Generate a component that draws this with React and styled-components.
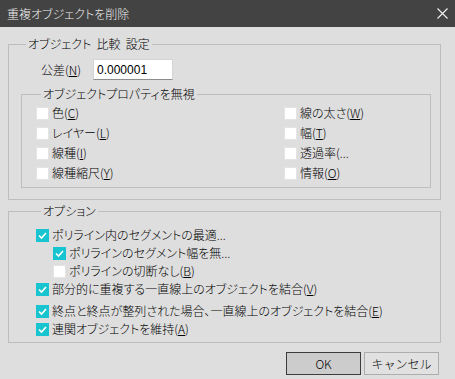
import React from 'react'
import styled, { createGlobalStyle } from 'styled-components'

const GlobalStyle = createGlobalStyle`
  html, body {
    margin: 0;
    padding: 0;
    background: #dedede;
  }
  body {
    font-family: "Noto Sans CJK JP", "Noto Sans", sans-serif;
    font-size: 12px;
    font-weight: 300;
    color: #000;
    font-feature-settings: "palt";
  }
`

const properties = [
  ['色(', 'C', ')'],
  ['線の太さ(', 'W', ')'],
  ['レイヤー(', 'L', ')'],
  ['幅(', 'T', ')'],
  ['線種(', 'I', ')'],
  ['透過率(...', '', ''],
  ['線種縮尺(', 'Y', ')'],
  ['情報(', 'O', ')'],
]

const options = [
  { pre: 'ポリライン内のセグメントの最適...', key: '', post: '', checked: true, level: 0 },
  { pre: 'ポリラインのセグメント幅を無...', key: '', post: '', checked: true, level: 1 },
  { pre: 'ポリラインの切断なし(', key: 'B', post: ')', checked: false, level: 1 },
  { pre: '部分的に重複する一直線上のオブジェクトを結合(', key: 'V', post: ')', checked: true, level: 0 },
  { pre: '終点と終点が整列された場合、一直線上のオブジェクトを結合(', key: 'E', post: ')', checked: true, level: 0, gap: true },
  { pre: '連関オブジェクトを維持(', key: 'A', post: ')', checked: true, level: 0 },
]

const CheckBox = ({ checked }) => (
  <Box checked={checked}>
    {checked && (
      <svg width="13" height="13" viewBox="0 0 13 13">
        <path d="M3 6.5 L5.5 9 L10 4" fill="none" stroke="#fff" strokeWidth="1.6" />
      </svg>
    )}
  </Box>
)

const Label = ({ pre, k, post }) => (
  <span>
    {pre}
    {k && <u>{k}</u>}
    {post}
  </span>
)

const App = () => {
  return (
    <Window>
      <GlobalStyle />
      <TitleBar>
        <Title>重複オブジェクトを削除</Title>
        <svg width="11" height="11" viewBox="0 0 11 11">
          <path d="M0.5 0.5 L10.5 10.5 M10.5 0.5 L0.5 10.5" stroke="#f2f2f2" strokeWidth="1.1" />
        </svg>
      </TitleBar>
      <Body>
        <Group>
          <Legend>オブジェクト&nbsp;&nbsp;比較&nbsp;&nbsp;設定</Legend>
          <ToleranceRow>
            <FieldLabel>公差(<u>N</u>)</FieldLabel>
            <TextInput defaultValue="0.000001" />
          </ToleranceRow>
          <InnerGroup>
            <Legend>オブジェクトプロパティを無視</Legend>
            <PropGrid>
              {properties.map(([pre, k, post]) => (
                <CheckRow key={pre}>
                  <CheckBox checked={false} />
                  <Label pre={pre} k={k} post={post} />
                </CheckRow>
              ))}
            </PropGrid>
          </InnerGroup>
        </Group>
        <OptionGroup>
          <Legend>オプション</Legend>
          {options.map(o => (
            <OptionRow key={o.pre} level={o.level} gap={o.gap}>
              <CheckBox checked={o.checked} />
              <Label pre={o.pre} k={o.key} post={o.post} />
            </OptionRow>
          ))}
        </OptionGroup>
        <Buttons>
          <Button primary>OK</Button>
          <Button>キャンセル</Button>
        </Buttons>
      </Body>
    </Window>
  )
}

const Window = styled.div({
  width: '455px',
  height: '379px',
  background: '#dedede',
  overflow: 'hidden',
})

const TitleBar = styled.div({
  height: '27px',
  background: '#434343',
  display: 'flex',
  alignItems: 'center',
  justifyContent: 'space-between',
  padding: '0 7px 0 7px',
  boxSizing: 'border-box',
  '& svg': { marginTop: '-1px' },
})

const Title = styled.div({
  color: '#f0f0f0',
  fontSize: '12px',
  lineHeight: '16px',
})

const Body = styled.div({
  padding: '0 14px 0 8px',
  display: 'flex',
  flexDirection: 'column',
})

const Group = styled.fieldset({
  margin: '9px 0 0 0',
  width: '433px',
  boxSizing: 'border-box',
  border: '1px solid #bdbdbd',
  padding: '0 9px 11px 12px',
  minWidth: 0,
})

const Legend = styled.legend({
  padding: '0 2px',
  marginLeft: '5px',
  lineHeight: '16px',
  height: '16px',
})

const ToleranceRow = styled.div({
  display: 'flex',
  alignItems: 'center',
  gap: '12px',
  paddingTop: '7px',
})

const FieldLabel = styled.label({
  width: '60px',
  textAlign: 'right',
  lineHeight: '16px',
})

const TextInput = styled.input({
  width: '80px',
  height: '21px',
  boxSizing: 'border-box',
  border: '1px solid #d4d4d4',
  borderBottom: '1px solid #8c8c8c',
  background: '#fff',
  padding: '0 3px',
  fontFamily: '"Liberation Sans", sans-serif',
  fontSize: '12px',
  color: '#000',
  outline: 'none',
})

const InnerGroup = styled.fieldset({
  margin: '6px 0 0 0',
  border: '1px solid #bdbdbd',
  padding: '1px 0 4px 14px',
  minWidth: 0,
})

const PropGrid = styled.div({
  display: 'grid',
  gridTemplateColumns: '248px 1fr',
  gridAutoRows: '20px',
})

const CheckRow = styled.div({
  display: 'flex',
  alignItems: 'center',
  gap: '3px',
  whiteSpace: 'nowrap',
  lineHeight: '16px',
})

const Box = styled.span`
  width: 13px;
  height: 13px;
  flex: none;
  box-sizing: border-box;
  background: ${p => (p.checked ? '#18c4cf' : '#ffffff')};
  border: 1px solid ${p => (p.checked ? '#18c4cf' : '#e4e4e4')};
  display: flex;
  align-items: center;
  justify-content: center;
  & svg { margin: -1px; }
`

const OptionGroup = styled.fieldset({
  margin: '3px 0 0 0',
  width: '433px',
  boxSizing: 'border-box',
  border: '1px solid #bdbdbd',
  padding: '7px 0 4px 27px',
  minWidth: 0,
})

const OptionRow = styled(CheckRow)`
  height: 18px;
  padding-left: ${p => p.level * 17}px;
  margin-top: ${p => (p.gap ? '4px' : '0')};
`

const Buttons = styled.div({
  display: 'flex',
  justifyContent: 'flex-end',
  gap: '3px',
  marginTop: '9px',
  paddingRight: '2px',
})

const Button = styled.button`
  width: 75px;
  height: 23px;
  box-sizing: border-box;
  font-family: "Noto Sans CJK JP", "Noto Sans", sans-serif;
  font-size: 12px;
  font-weight: 300;
  font-feature-settings: normal;
  color: #000;
  padding: 0;
  background: ${p => (p.primary ? '#cccccc' : '#e1e1e1')};
  border: 1px solid ${p => (p.primary ? '#3c3c3c' : '#adadad')};
`

export default App
